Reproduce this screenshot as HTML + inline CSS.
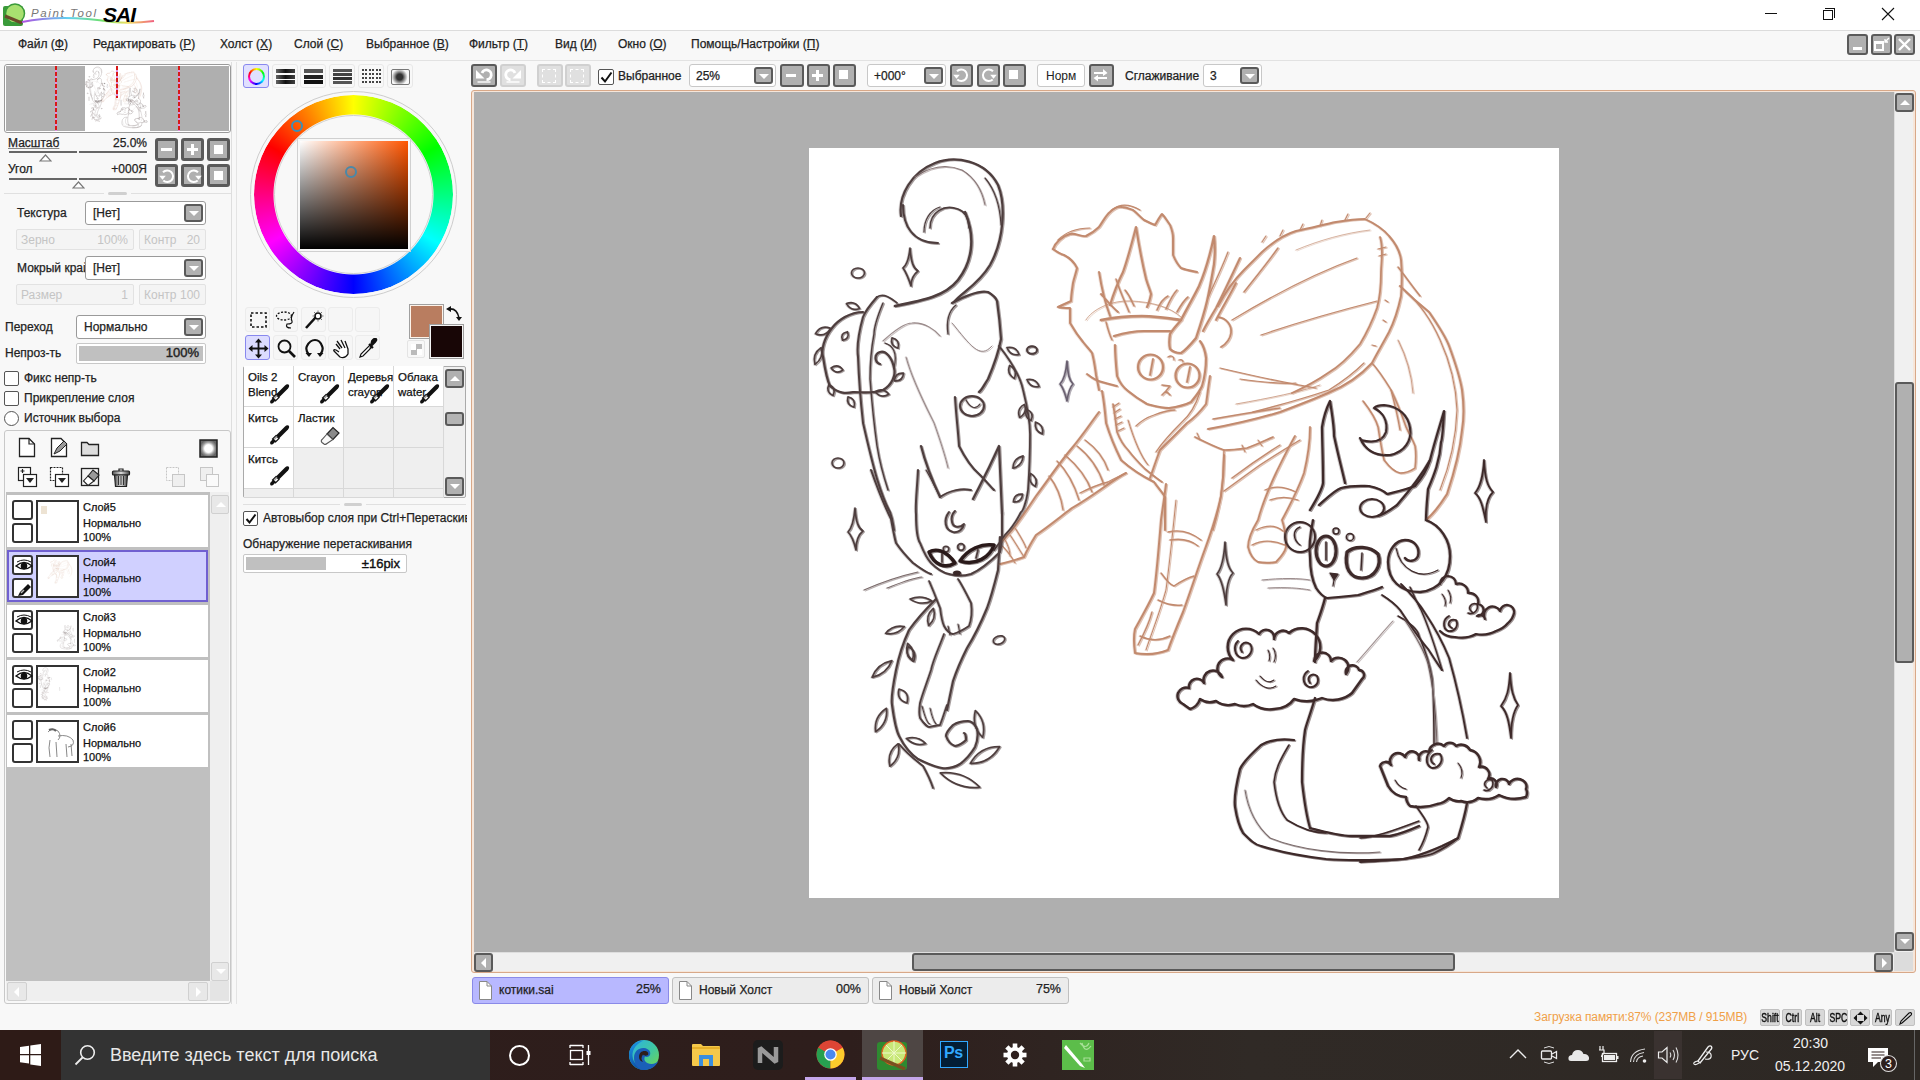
<!DOCTYPE html>
<html><head><meta charset="utf-8">
<style>
*{box-sizing:border-box;margin:0;padding:0}
html,body{width:1920px;height:1080px;overflow:hidden;background:#f8f8f8;font-family:"Liberation Sans",sans-serif;font-size:12px;color:#222}
.lbl,.mi,.dd span,.cmb span,.lt1,.bcell span,.tab span{-webkit-text-stroke:0.25px currentColor}
.a{position:absolute}
#title{left:0;top:0;width:1920px;height:31px;background:#fff;border-bottom:1px solid #dcdcdc}
#menu{left:0;top:31px;width:1920px;height:30px;background:#f8f8f8;border-bottom:1px solid #e2e2e2}
.mi{position:absolute;top:6px;font-size:12px;color:#222;white-space:nowrap}
.u{text-decoration:underline}
.gbtn{position:absolute;width:23px;height:23px;background:#b0b0b0;border:3px solid #5a5a5a;border-radius:3px}
.lbl{position:absolute;white-space:nowrap;font-size:12px;color:#222}
#canvasArea{left:471px;top:90px;width:1445px;height:883px;border:1px solid #d8a888;border-radius:3px;background:#f6e6da}
#paper{left:809px;top:148px;width:750px;height:750px;background:#fff}
#taskbar{left:0;top:1030px;width:1920px;height:50px;background:linear-gradient(90deg,#2e1d1b 0,#2e1e1c 850px,#302a26 1250px,#2d2824 1920px)}

.dd{background:#fff;border:1px solid #9a9a9a;border-radius:3px}
.dd span{position:absolute;left:7px;top:4px;font-size:12px;color:#222;white-space:nowrap}
.dd i{position:absolute;right:2px;top:2px;width:19px;height:18px;background:#b0b0b0;border:2px solid #5a5a5a;border-radius:3px}
.dd i:after{content:"";position:absolute;left:3px;top:5px;border-left:5px solid transparent;border-right:5px solid transparent;border-top:5px solid #fff}
.dis{background:#f4f4f4;border:1px solid #e2e2e2;border-radius:2px}
.dis span{position:absolute;top:3px;font-size:12px;color:#c4c4c4;white-space:nowrap}
.cb{width:15px;height:15px;border:1px solid #555;border-radius:2px;background:#fff}

.sbtn{width:18px;height:19px;background:#e8e8e8;border:1px solid #d0d0d0;border-radius:2px}
.sbtn i{position:absolute;left:4px;top:6px;width:0;height:0}
.sbtn i.up{border-left:5px solid transparent;border-right:5px solid transparent;border-bottom:5px solid #fff}
.sbtn i.dn{border-left:5px solid transparent;border-right:5px solid transparent;border-top:5px solid #fff}
.sbtn i.lt{left:6px;top:4px;border-top:5px solid transparent;border-bottom:5px solid transparent;border-right:5px solid #fff}
.sbtn i.rt{left:7px;top:4px;border-top:5px solid transparent;border-bottom:5px solid transparent;border-left:5px solid #fff}
.layer{width:201px;height:52px;background:#fff}
.layer.sel{background:#d0d0ff;border:2px solid #7060d0;left:8px}
.layer.sel>*{margin-left:-2px;margin-top:-2px}
.vbox{width:21px;height:20px;border:2px solid #333;border-radius:3px;background:#fff}
.thumb{width:43px;height:43px;border:2px solid #333;background:#fff}
.lt1{font-size:11px;color:#111;white-space:nowrap}

.cbt{width:26px;height:24px;border:1px solid #e8e8e8;border-radius:3px;background:#f8f8f8}
.cbt.sel{border:1px solid #8888ee;background:#e0e0ff}
.tbt{width:25px;height:25px;border:1px solid #ececec;border-radius:3px;background:#f6f6f6}
.tbt.sel{border:1px solid #8888ee;background:#dcdcff}
.bcell{border-right:1px solid #d8d8d8;border-bottom:1px solid #d8d8d8;font-size:11.5px;line-height:15px;color:#111;overflow:hidden}
.bcell span{white-space:nowrap;margin-top:1px}
.sbt2{width:19px;height:19px;background:#b0b0b0;border:2px solid #5a5a5a;border-radius:3px}
.sbt2 i{position:absolute;left:3px;top:5px;width:0;height:0}
.sbt2 i.up{border-left:5px solid transparent;border-right:5px solid transparent;border-bottom:5px solid #fff}
.sbt2 i.dn{border-left:5px solid transparent;border-right:5px solid transparent;border-top:5px solid #fff}

.mdi{width:21px;height:21px;background:#b0b0b0;border:2px solid #5a5a5a;border-radius:3px}
.tb2{width:26px;height:23px;background:#b0b0b0;border:2px solid #5a5a5a;border-radius:3px}
.tb2.dis2{background:#e0e0e0;border-color:#d0d0d0}
.cmb{background:#fff;border:1px solid #c8c8c8;border-radius:3px}
.cmb span{position:absolute;top:4px;font-size:12px;color:#222}
.cmb i{position:absolute;right:2px;top:2px;width:19px;height:17px;background:#b0b0b0;border:2px solid #5a5a5a;border-radius:3px}
.cmb i:after{content:"";position:absolute;left:3px;top:5px;border-left:5px solid transparent;border-right:5px solid transparent;border-top:5px solid #fff}
.sbt2 i.lt{left:5px;top:3px;border-top:5px solid transparent;border-bottom:5px solid transparent;border-right:5px solid #fff}
.sbt2 i.rt{left:6px;top:3px;border-top:5px solid transparent;border-bottom:5px solid transparent;border-left:5px solid #fff}
.tab{width:197px;height:27px;background:#ececec;border:1px solid #c0c0c0;border-radius:3px;font-size:12px;color:#222;white-space:nowrap}
.tab.sel{background:#b8b8ff;border-color:#8a8ae8}
.tab .pg{left:5px;top:2px}
.key{width:20px;height:17px;background:#d8d8d8;border:1px solid #c0c0c0;border-radius:2px;font-size:12px;color:#111;text-align:center;line-height:16px;overflow:hidden;white-space:nowrap}
.key b{display:inline-block;font-weight:normal;transform:scaleX(.72);transform-origin:50% 50%;margin:0 -8px;-webkit-text-stroke:.45px #111}
</style></head><body>
<div id="title" class="a"></div>
<div id="menu" class="a">
<span class="mi" style="left:18px">Файл (<span class="u">Ф</span>)</span>
<span class="mi" style="left:93px">Редактировать (<span class="u">Р</span>)</span>
<span class="mi" style="left:220px">Холст (<span class="u">Х</span>)</span>
<span class="mi" style="left:294px">Слой (<span class="u">С</span>)</span>
<span class="mi" style="left:366px">Выбранное (<span class="u">В</span>)</span>
<span class="mi" style="left:469px">Фильтр (<span class="u">Т</span>)</span>
<span class="mi" style="left:555px">Вид (<span class="u">И</span>)</span>
<span class="mi" style="left:618px">Окно (<span class="u">О</span>)</span>
<span class="mi" style="left:691px">Помощь/Настройки (<span class="u">П</span>)</span>
</div>

<!-- LEFT PANEL -->
<div class="a" style="left:231px;top:62px;width:1px;height:942px;background:#dedede"></div>
<div class="a" style="left:4px;top:64px;width:227px;height:69px;border:1px solid #9a9a9a;border-radius:3px;background:#fff"></div>
<div class="a" style="left:6px;top:66px;width:223px;height:65px;background:#afafaf"></div>
<div class="a" style="left:85px;top:66px;width:65px;height:65px;background:#fff"></div>
<svg class="a" style="left:85px;top:66px" width="65" height="65" viewBox="809 148 750 750"><defs><filter id="thk" x="-5%" y="-5%" width="110%" height="110%"><feMorphology operator="dilate" radius="5"/></filter><filter id="thk2" x="-5%" y="-5%" width="110%" height="110%"><feMorphology operator="dilate" radius="2.5"/></filter></defs><g filter="url(#thk)" opacity=".95"><use href="#drw"/></g></svg>
<div class="a" style="left:55px;top:66px;width:2px;height:65px;background:repeating-linear-gradient(#d81818 0 4px,#e090e0 4px 6px)"></div>
<div class="a" style="left:116px;top:66px;width:2px;height:32px;background:repeating-linear-gradient(#d81818 0 4px,#e090e0 4px 6px)"></div>
<div class="a" style="left:178px;top:66px;width:2px;height:65px;background:repeating-linear-gradient(#d81818 0 4px,#e090e0 4px 6px)"></div>

<span class="lbl" style="left:8px;top:136px;text-decoration:underline;text-decoration-color:#888">Масштаб</span>
<span class="lbl" style="left:100px;top:136px;width:47px;text-align:right">25.0%</span>
<div class="a" style="left:9px;top:151px;width:68px;height:2px;background:#666"></div>
<div class="a" style="left:79px;top:151px;width:68px;height:2px;background:#666"></div>
<svg class="a" style="left:39px;top:154px" width="13" height="8"><path d="M6.5 1 L12 7 L1 7 Z" fill="#fff" stroke="#777" stroke-width="1.2"/></svg>
<span class="lbl" style="left:8px;top:162px">Угол</span>
<span class="lbl" style="left:100px;top:162px;width:47px;text-align:right">+000Я</span>
<div class="a" style="left:9px;top:178px;width:68px;height:2px;background:#666"></div>
<div class="a" style="left:79px;top:178px;width:68px;height:2px;background:#666"></div>
<svg class="a" style="left:72px;top:181px" width="13" height="8"><path d="M6.5 1 L12 7 L1 7 Z" fill="#fff" stroke="#777" stroke-width="1.2"/></svg>

<div class="gbtn" style="left:155px;top:138px"><div class="a" style="left:3px;top:7px;width:11px;height:3px;background:#fff"></div></div>
<div class="gbtn" style="left:181px;top:138px"><div class="a" style="left:3px;top:7px;width:11px;height:3px;background:#fff"></div><div class="a" style="left:7px;top:3px;width:3px;height:11px;background:#fff"></div></div>
<div class="gbtn" style="left:207px;top:138px"><div class="a" style="left:4px;top:4px;width:9px;height:9px;background:#fff"></div></div>
<div class="gbtn" style="left:155px;top:164px"><svg class="a" style="left:-2px;top:-2px" width="23" height="23"><path d="M7 7.3 A5.8 5.8 0 1 1 7.3 15.5" fill="none" stroke="#fff" stroke-width="2"/><path d="M3.2 10.8 H9.8 L6.5 14.8Z" fill="#fff"/></svg></div>
<div class="gbtn" style="left:181px;top:164px"><svg class="a" style="left:-2px;top:-2px" width="23" height="23"><path d="M16 7.3 A5.8 5.8 0 1 0 15.7 15.5" fill="none" stroke="#fff" stroke-width="2"/><path d="M13.2 10.8 H19.8 L16.5 14.8Z" fill="#fff"/></svg></div>
<div class="gbtn" style="left:207px;top:164px"><div class="a" style="left:4px;top:4px;width:9px;height:9px;background:#fff"></div></div>

<div class="a" style="left:4px;top:193px;width:100px;height:1px;background:#e0e0e0"></div>
<div class="a" style="left:131px;top:193px;width:100px;height:1px;background:#e0e0e0"></div>
<div class="a" style="left:108px;top:192px;width:19px;height:3px;border-radius:2px;background:#d0d0d0"></div>

<span class="lbl" style="left:17px;top:206px">Текстура</span>
<div class="a dd" style="left:85px;top:201px;width:121px;height:24px"><span>[Нет]</span><i></i></div>
<div class="a dis" style="left:16px;top:229px;width:118px;height:21px"><span style="left:4px">Зерно</span><span style="right:5px">100%</span></div>
<div class="a dis" style="left:139px;top:229px;width:67px;height:21px"><span style="left:4px">Контр</span><span style="right:5px">20</span></div>
<span class="lbl" style="left:17px;top:261px">Мокрый край</span>
<div class="a dd" style="left:85px;top:256px;width:121px;height:24px"><span>[Нет]</span><i></i></div>
<div class="a dis" style="left:16px;top:284px;width:118px;height:21px"><span style="left:4px">Размер</span><span style="right:5px">1</span></div>
<div class="a dis" style="left:139px;top:284px;width:67px;height:21px"><span style="left:4px">Контр</span><span style="right:5px">100</span></div>

<span class="lbl" style="left:5px;top:320px">Переход</span>
<div class="a dd" style="left:76px;top:315px;width:130px;height:24px"><span style="left:7px">Нормально</span><i></i></div>
<span class="lbl" style="left:5px;top:346px">Непроз-ть</span>
<div class="a" style="left:76px;top:343px;width:130px;height:21px;border:1px solid #c8c8c8;border-radius:2px;background:#fff"><div class="a" style="left:2px;top:2px;width:124px;height:15px;background:#c0c0c0"></div><span class="a" style="right:6px;top:1px;font-size:13px;color:#222;-webkit-text-stroke:.4px #222">100%</span></div>

<div class="a cb" style="left:4px;top:371px"></div><span class="lbl" style="left:24px;top:371px">Фикс непр-ть</span>
<div class="a cb" style="left:4px;top:391px"></div><span class="lbl" style="left:24px;top:391px">Прикрепление слоя</span>
<div class="a" style="left:4px;top:411px;width:15px;height:15px;border:1px solid #555;border-radius:50%;background:#fff"></div><span class="lbl" style="left:24px;top:411px">Источник выбора</span>

<!-- layers box -->
<div class="a" style="left:4px;top:430px;width:227px;height:574px;border:1px solid #c8c8c8;border-radius:3px;background:#f8f8f8"></div>

<!-- layer icons -->
<svg class="a" style="left:17px;top:437px" width="20" height="21"><path d="M2.5 1.5 H12 L17.5 7 V19.5 H2.5 Z" fill="#fff" stroke="#222" stroke-width="1.3"/><path d="M12 1.5 V7 H17.5" fill="none" stroke="#222" stroke-width="1.2"/></svg>
<svg class="a" style="left:49px;top:437px" width="21" height="21"><path d="M2.5 1.5 H12 L17.5 7 V19.5 H2.5 Z" fill="#fff" stroke="#222" stroke-width="1.3"/><path d="M5 17 L8 11 L15 4 L18 7 L11 14 Z" fill="#999" stroke="#222" stroke-width="1"/></svg>
<svg class="a" style="left:80px;top:439px" width="20" height="18"><path d="M1.5 3.5 H7 L9 5.5 H18.5 V16.5 H1.5 Z" fill="#ddd" stroke="#222" stroke-width="1.3"/></svg>
<svg class="a" style="left:199px;top:439px" width="19" height="19"><defs><radialGradient id="mk"><stop offset=".45" stop-color="#fff"/><stop offset=".75" stop-color="#999"/><stop offset="1" stop-color="#666"/></radialGradient></defs><rect x="1" y="1" width="17" height="17" fill="url(#mk)" stroke="#222" stroke-width="1.5"/></svg>
<svg class="a" style="left:17px;top:466px" width="21" height="22"><rect x="1.5" y="1.5" width="12" height="13" fill="#fff" stroke="#222" stroke-width="1.2"/><rect x="6.5" y="8.5" width="13" height="12" fill="#fff" stroke="#222" stroke-width="1.2"/><path d="M7.5 5 h-4 M5.5 3 v4" stroke="#222" stroke-width="1.2"/><path d="M9 12 h8 l-4 5z" fill="#222"/></svg>
<svg class="a" style="left:49px;top:466px" width="21" height="22"><rect x="1.5" y="1.5" width="12" height="13" fill="#fff" stroke="#222" stroke-width="1.2" stroke-dasharray="2 1"/><rect x="6.5" y="8.5" width="13" height="12" fill="#fff" stroke="#222" stroke-width="1.2"/><path d="M9 12 h8 l-4 5z" fill="#222"/></svg>
<svg class="a" style="left:80px;top:466px" width="21" height="22"><rect x="1.5" y="2.5" width="17" height="17" fill="#f4f4f4" stroke="#222" stroke-width="1.3"/><path d="M8 10 L13 4 L19 9 L14 15Z" fill="#999" stroke="#222" stroke-width="1.1"/><path d="M8 10 L3.5 15 L8 19.5 L14 15Z" fill="#fff" stroke="#222" stroke-width="1.1"/></svg>
<svg class="a" style="left:111px;top:466px" width="21" height="22"><defs><linearGradient id="tr"><stop offset="0" stop-color="#555"/><stop offset=".5" stop-color="#ddd"/><stop offset="1" stop-color="#444"/></linearGradient></defs><rect x="1.5" y="5" width="17" height="4" rx="1" fill="url(#tr)" stroke="#222" stroke-width="1.2"/><path d="M8 5 V3 H12 V5" fill="none" stroke="#222" stroke-width="1.2"/><path d="M3.5 9 H16.5 L15.5 20.5 H4.5Z" fill="url(#tr)" stroke="#222" stroke-width="1.2"/><path d="M7.5 10 V19 M10 10 V19 M12.5 10 V19" stroke="#333" stroke-width="1"/></svg>
<svg class="a" style="left:165px;top:466px" width="21" height="22" opacity="0.3"><rect x="1.5" y="1.5" width="12" height="13" fill="#fff" stroke="#555" stroke-dasharray="2 1"/><rect x="7.5" y="8.5" width="12" height="12" fill="#ddd" stroke="#555"/></svg>
<svg class="a" style="left:199px;top:466px" width="21" height="22" opacity="0.3"><rect x="1.5" y="1.5" width="12" height="13" fill="#ddd" stroke="#555"/><rect x="7.5" y="8.5" width="12" height="12" fill="#fff" stroke="#555"/></svg>

<div class="a" style="left:6px;top:492px;width:204px;height:489px;background:#c0c0c0"></div>
<div class="a" style="left:210px;top:492px;width:19px;height:489px;background:#efefef"></div>
<div class="a sbtn" style="left:211px;top:495px"><i class="up"></i></div>
<div class="a sbtn" style="left:211px;top:962px"><i class="dn"></i></div>
<div class="a" style="left:6px;top:981px;width:204px;height:20px;background:#efefef"></div>
<div class="a sbtn" style="left:7px;top:982px;width:20px"><i class="lt"></i></div>
<div class="a sbtn" style="left:188px;top:982px;width:20px"><i class="rt"></i></div>
<div class="a" style="left:210px;top:981px;width:19px;height:20px;background:#e4e4e4"></div>
<div class="a layer" style="left:7px;top:495px"><div class="a vbox" style="left:5px;top:5px"></div><div class="a vbox" style="left:5px;top:28px"></div><div class="a thumb" style="left:29px;top:5px"><div class="a" style="left:3px;top:4px;width:6px;height:8px;background:#e8dcc8;opacity:.8"></div></div><span class="a lt1" style="left:76px;top:6px">Слой5</span><span class="a lt1" style="left:76px;top:22px">Нормально</span><span class="a lt1" style="left:76px;top:36px">100%</span></div>
<div class="a layer sel" style="left:7px;top:550px"><div class="a vbox" style="left:5px;top:5px"><svg class="a" style="left:1px;top:2px" width="18" height="14"><path d="M1 7 Q9 0 17 7 Q9 13 1 7Z" fill="#fff" stroke="#111" stroke-width="1.4"/><circle cx="9" cy="7" r="3.3" fill="#111"/><path d="M2 3 Q9 -1 16 3" fill="none" stroke="#111" stroke-width="1"/></svg></div><div class="a vbox" style="left:5px;top:28px"><svg class="a" style="left:1px;top:1px" width="18" height="17"><path d="M3 15 L5 11 L13 3 L16 6 L8 14 Z" fill="#111"/><path d="M6 12 L9 9" stroke="#bbb" stroke-width="1.5"/></svg></div><div class="a thumb" style="left:29px;top:5px"><svg class="a" width="39" height="39" viewBox="809 148 750 750"><g filter="url(#thk)" opacity=".9" fill="none" stroke-linecap="round" stroke-linejoin="round"><use href="#gor"/></g></svg></div><span class="a lt1" style="left:76px;top:6px">Слой4</span><span class="a lt1" style="left:76px;top:22px">Нормально</span><span class="a lt1" style="left:76px;top:36px">100%</span></div>
<div class="a layer" style="left:7px;top:605px"><div class="a vbox" style="left:5px;top:5px"><svg class="a" style="left:1px;top:2px" width="18" height="14"><path d="M1 7 Q9 0 17 7 Q9 13 1 7Z" fill="#fff" stroke="#111" stroke-width="1.4"/><circle cx="9" cy="7" r="3.3" fill="#111"/><path d="M2 3 Q9 -1 16 3" fill="none" stroke="#111" stroke-width="1"/></svg></div><div class="a vbox" style="left:5px;top:28px"></div><div class="a thumb" style="left:29px;top:5px"><svg class="a" width="39" height="39" viewBox="809 148 750 750"><g filter="url(#thk)" opacity=".9" fill="none" stroke-linecap="round" stroke-linejoin="round"><use href="#gdr"/></g></svg></div><span class="a lt1" style="left:76px;top:6px">Слой3</span><span class="a lt1" style="left:76px;top:22px">Нормально</span><span class="a lt1" style="left:76px;top:36px">100%</span></div>
<div class="a layer" style="left:7px;top:660px"><div class="a vbox" style="left:5px;top:5px"><svg class="a" style="left:1px;top:2px" width="18" height="14"><path d="M1 7 Q9 0 17 7 Q9 13 1 7Z" fill="#fff" stroke="#111" stroke-width="1.4"/><circle cx="9" cy="7" r="3.3" fill="#111"/><path d="M2 3 Q9 -1 16 3" fill="none" stroke="#111" stroke-width="1"/></svg></div><div class="a vbox" style="left:5px;top:28px"></div><div class="a thumb" style="left:29px;top:5px"><svg class="a" width="39" height="39" viewBox="809 148 750 750"><g filter="url(#thk)" opacity=".9" fill="none" stroke-linecap="round" stroke-linejoin="round"><use href="#gdl"/></g></svg></div><span class="a lt1" style="left:76px;top:6px">Слой2</span><span class="a lt1" style="left:76px;top:22px">Нормально</span><span class="a lt1" style="left:76px;top:36px">100%</span></div>
<div class="a layer" style="left:7px;top:715px"><div class="a vbox" style="left:5px;top:5px"></div><div class="a vbox" style="left:5px;top:28px"></div><div class="a thumb" style="left:29px;top:5px"><svg class="a" width="41" height="41"><g fill="none" stroke="#444" stroke-width=".9" opacity=".7"><path d="M10 10 Q14 5 20 9 Q24 14 20 18 M12 18 Q10 25 12 35 M18 20 L19 35 M20 14 Q30 12 35 18 Q37 24 30 25 M28 22 L29 35 M33 22 L34 34"/><path d="M11 8 Q15 6 18 9" stroke="#222" stroke-width="2"/></g></svg></div><span class="a lt1" style="left:76px;top:6px">Слой6</span><span class="a lt1" style="left:76px;top:22px">Нормально</span><span class="a lt1" style="left:76px;top:36px">100%</span></div>

<!-- COLOR PANEL -->
<div class="a" style="left:236px;top:62px;width:1px;height:942px;background:#e4e4e4"></div>
<div class="a cbt sel" style="left:243px;top:64px"><div class="a" style="left:4px;top:3px;width:17px;height:17px;border-radius:50%;background:conic-gradient(#ff0 0deg,#0f0 60deg,#0ff 120deg,#00f 180deg,#f0f 240deg,#f00 300deg,#ff0 360deg)"><div class="a" style="left:2px;top:2px;width:13px;height:13px;border-radius:50%;background:#e0e0ff"></div></div></div>
<div class="a cbt" style="left:272px;top:64px"><div class="a" style="left:3px;top:4px;width:19px;height:15px;background:linear-gradient(#111 0 4px,transparent 4px 5.5px,#111 5.5px 9.5px,transparent 9.5px 11px,#111 11px 15px)"></div><div class="a" style="left:3px;top:4px;width:19px;height:15px;background:linear-gradient(90deg,rgba(255,255,255,.35),rgba(255,255,255,0) 50%,rgba(255,255,255,.2))"></div></div>
<div class="a cbt" style="left:300px;top:64px"><div class="a" style="left:3px;top:4px;width:19px;height:15px;background:linear-gradient(#555 0 4px,transparent 4px 5.5px,#222 5.5px 9.5px,transparent 9.5px 11px,#111 11px 15px)"></div></div>
<div class="a cbt" style="left:329px;top:64px"><div class="a" style="left:3px;top:4px;width:19px;height:15px;background:linear-gradient(#555 0 2.5px,transparent 2.5px 4px,#444 4px 6.5px,transparent 6.5px 8px,#333 8px 10.5px,transparent 10.5px 12px,#555 12px 14.5px)"></div></div>
<div class="a cbt" style="left:358px;top:64px"><div class="a" style="left:3px;top:4px;width:19px;height:15px;background:repeating-linear-gradient(90deg,#444 0 2px,transparent 2px 3.5px);-webkit-mask:repeating-linear-gradient(#000 0 2px,transparent 2px 4px)"></div></div>
<div class="a cbt" style="left:387px;top:64px"><div class="a" style="left:3px;top:4px;width:19px;height:16px;border:1px solid #777;border-radius:2px;background:radial-gradient(circle at 45% 50%,#333 0 3px,#888 5px,transparent 8px)"></div></div>

<div class="a" style="left:250px;top:91px;width:207px;height:207px;border-radius:50%;border:1.5px solid #cdcdcd"></div>
<div class="a" style="left:254px;top:95px;width:199px;height:199px;border-radius:50%;background:conic-gradient(#ff0 0deg,#0f0 60deg,#0ff 120deg,#00f 180deg,#f0f 240deg,#f00 300deg,#ff0 360deg);-webkit-mask:radial-gradient(circle,transparent 79.5px,#000 80.5px)"></div>
<div class="a" style="left:274px;top:115px;width:159px;height:159px;border-radius:50%;border:1.5px solid #d0d0d0"></div>
<div class="a" style="left:297px;top:138px;width:114px;height:114px;border:1.5px solid #d0d0d0;background:#f8f8f8"></div>
<div class="a" style="left:300px;top:141px;width:108px;height:108px;background:linear-gradient(90deg,#fff,#ff5500)"></div>
<div class="a" style="left:300px;top:141px;width:108px;height:108px;background:linear-gradient(rgba(0,0,0,0),#000)"></div>
<div class="a" style="left:291px;top:120px;width:12px;height:12px;border-radius:50%;border:2.5px solid #3a90b8"></div>
<div class="a" style="left:345px;top:166px;width:12px;height:12px;border-radius:50%;border:2.5px solid #4a88a8"></div>

<!-- tools -->
<div class="a tbt" style="left:245px;top:307px"><svg class="a" style="left:3px;top:3px" width="19" height="18"><rect x="2" y="2" width="15" height="14" fill="none" stroke="#111" stroke-width="1.6" stroke-dasharray="2.5 2"/></svg></div>
<div class="a tbt" style="left:273px;top:307px"><svg class="a" style="left:1px;top:2px" width="22" height="20"><ellipse cx="9" cy="6" rx="7.5" ry="4" fill="none" stroke="#111" stroke-width="1.3" stroke-dasharray="2 1.5"/><path d="M19 2 Q15 8 17 11 Q18 14 12 14 Q10 18 16 18" fill="none" stroke="#111" stroke-width="1.2"/></svg></div>
<div class="a tbt" style="left:301px;top:307px"><svg class="a" style="left:2px;top:2px" width="21" height="20"><path d="M2 18 L12 7" stroke="#111" stroke-width="2.6"/><circle cx="14" cy="6" r="3" fill="#fff" stroke="#111" stroke-width="1.6"/><path d="M14 0.5v2 M14 9.5v2 M8.5 6h2 M17.5 6h2 M10 2l1.3 1.3 M18 2l-1.3 1.3 M18 10l-1.3-1.3" stroke="#777" stroke-width="1"/></svg></div>
<div class="a tbt" style="left:328px;top:307px"></div>
<div class="a tbt" style="left:355px;top:307px"></div>
<div class="a tbt sel" style="left:245px;top:335px"><svg class="a" style="left:2px;top:2px" width="21" height="21"><path d="M10.5 2 V19 M2 10.5 H19" stroke="#111" stroke-width="1.8"/><path d="M10.5 0.5 L7 4.5 H14Z M10.5 20.5 L7 16.5 H14Z M0.5 10.5 L4.5 7 V14Z M20.5 10.5 L16.5 7 V14Z" fill="#111"/></svg></div>
<div class="a tbt" style="left:273px;top:335px"><svg class="a" style="left:2px;top:2px" width="21" height="21"><circle cx="8.5" cy="8.5" r="6" fill="none" stroke="#111" stroke-width="1.8"/><path d="M13 13 L19 19" stroke="#111" stroke-width="2.6"/></svg></div>
<div class="a tbt" style="left:301px;top:335px"><svg class="a" style="left:2px;top:2px" width="21" height="21"><path d="M5 17 Q1 12 3 8 Q6 2 11 2 Q16 2 18 8 Q20 12 16 17" fill="none" stroke="#111" stroke-width="2.2"/><path d="M1.5 15 H8 L5 19Z M19.5 15 H13 L16 19Z" fill="#111"/></svg></div>
<div class="a tbt" style="left:328px;top:335px"><svg class="a" style="left:2px;top:2px" width="21" height="21"><path d="M5 6 L9 11 M6 3 L11 10 M10 2 L14 10 M14 3 L17 11 L17 16 Q14 21 9 19 L3 13 Q2 11 5 12 L8 14" fill="#fff" stroke="#111" stroke-width="1.3" stroke-linejoin="round"/></svg></div>
<div class="a tbt" style="left:355px;top:335px"><svg class="a" style="left:2px;top:2px" width="21" height="21"><path d="M2 19 L3 16 L12 7 L14 9 L5 18Z" fill="#fff" stroke="#111" stroke-width="1.2"/><path d="M11 6 L15 10 M13 8 L17 4 Q19 2 18 1 Q16 0 14 3 Z" fill="#111" stroke="#111" stroke-width="2"/></svg></div>

<div class="a" style="left:409px;top:304px;width:35px;height:35px;background:#fdf3ea;border:1px solid #a0a0a0"><div class="a" style="left:1px;top:1px;width:31px;height:31px;background:#b97d60"></div></div>
<div class="a" style="left:429px;top:324px;width:35px;height:35px;background:#f4f4f4;border:1px solid #a0a0a0"><div class="a" style="left:1px;top:1px;width:31px;height:31px;background:#180606"></div></div>
<svg class="a" style="left:445px;top:305px" width="18" height="18"><path d="M4 4 Q12 3 14 13" fill="none" stroke="#111" stroke-width="1.6"/><path d="M1 4 L6 1 V7Z M11 12 H17 L14 16Z" fill="#111"/></svg>
<div class="a" style="left:407px;top:340px;width:18px;height:18px;border:1px solid #e4e4e4;border-radius:2px;background:#f8f8f8"><div class="a" style="left:3px;top:3px;width:11px;height:11px;background:conic-gradient(#bbb 0 90deg,#fff 90deg 180deg,#bbb 180deg 270deg,#fff 270deg)"></div></div>

<!-- brushes -->
<div class="a" style="left:243px;top:366px;width:223px;height:132px;border:1px solid #aaa;border-radius:2px;background:#f0f0f0;overflow:hidden">
 <div class="a" style="left:0;top:0;width:201px;height:130px;background:#efefef"></div>
</div>
<div class="a bcell" style="left:244px;top:366px;width:50px;height:41px;background:#fff"><span class="a" style="left:4px;top:3px">Oils 2<br>Blend</span><svg class="a" style="right:2px;bottom:2px" width="22" height="21"><path d="M19.5 1.5 Q21 3 19 5.5 L10 14.5 L7 11.5 L16 2.5 Q18 0.5 19.5 1.5Z" fill="#111"/><path d="M7 11.5 L10 14.5 L6.5 18 L3.5 15Z" fill="#fff" stroke="#111" stroke-width="1.2"/><path d="M4.5 14.5 L7 17 L4 20 Q2 21 1.5 20 Q0.5 19 1.5 17.5Z" fill="#111"/><path d="M5.5 15 L8 12.5" stroke="#999" stroke-width="1.5"/></svg></div>
<div class="a bcell" style="left:294px;top:366px;width:50px;height:41px;background:#fff"><span class="a" style="left:4px;top:3px">Crayon</span><svg class="a" style="right:2px;bottom:2px" width="22" height="21"><path d="M19.5 1.5 Q21 3 19 5.5 L10 14.5 L7 11.5 L16 2.5 Q18 0.5 19.5 1.5Z" fill="#111"/><path d="M7 11.5 L10 14.5 L6.5 18 L3.5 15Z" fill="#fff" stroke="#111" stroke-width="1.2"/><path d="M4.5 14.5 L7 17 L4 20 Q2 21 1.5 20 Q0.5 19 1.5 17.5Z" fill="#111"/><path d="M5.5 15 L8 12.5" stroke="#999" stroke-width="1.5"/></svg></div>
<div class="a bcell" style="left:344px;top:366px;width:50px;height:41px;background:#fff"><span class="a" style="left:4px;top:3px">Деревья<br>crayon</span><svg class="a" style="right:2px;bottom:2px" width="22" height="21"><path d="M19.5 1.5 Q21 3 19 5.5 L10 14.5 L7 11.5 L16 2.5 Q18 0.5 19.5 1.5Z" fill="#111"/><path d="M7 11.5 L10 14.5 L6.5 18 L3.5 15Z" fill="#fff" stroke="#111" stroke-width="1.2"/><path d="M4.5 14.5 L7 17 L4 20 Q2 21 1.5 20 Q0.5 19 1.5 17.5Z" fill="#111"/><path d="M5.5 15 L8 12.5" stroke="#999" stroke-width="1.5"/></svg></div>
<div class="a bcell" style="left:394px;top:366px;width:50px;height:41px;background:#fff"><span class="a" style="left:4px;top:3px">Облака<br>water</span><svg class="a" style="right:2px;bottom:2px" width="22" height="21"><path d="M19.5 1.5 Q21 3 19 5.5 L10 14.5 L7 11.5 L16 2.5 Q18 0.5 19.5 1.5Z" fill="#111"/><path d="M7 11.5 L10 14.5 L6.5 18 L3.5 15Z" fill="#fff" stroke="#111" stroke-width="1.2"/><path d="M4.5 14.5 L7 17 L4 20 Q2 21 1.5 20 Q0.5 19 1.5 17.5Z" fill="#111"/><path d="M5.5 15 L8 12.5" stroke="#999" stroke-width="1.5"/></svg></div>
<div class="a bcell" style="left:244px;top:407px;width:50px;height:41px;background:#fff"><span class="a" style="left:4px;top:3px">Китсь</span><svg class="a" style="right:2px;bottom:2px" width="22" height="21"><path d="M19.5 1.5 Q21 3 19 5.5 L10 14.5 L7 11.5 L16 2.5 Q18 0.5 19.5 1.5Z" fill="#111"/><path d="M7 11.5 L10 14.5 L6.5 18 L3.5 15Z" fill="#fff" stroke="#111" stroke-width="1.2"/><path d="M4.5 14.5 L7 17 L4 20 Q2 21 1.5 20 Q0.5 19 1.5 17.5Z" fill="#111"/><path d="M5.5 15 L8 12.5" stroke="#999" stroke-width="1.5"/></svg></div>
<div class="a bcell" style="left:294px;top:407px;width:50px;height:41px;background:#fff"><span class="a" style="left:4px;top:3px">Ластик</span><svg class="a" style="right:3px;bottom:2px" width="22" height="21"><path d="M9 10 L15 3.5 L21 9 L15 15.5Z" fill="#8a8a8a" stroke="#222" stroke-width="1.2"/><path d="M9 10 L4 15.5 Q2.5 17 4 18.5 L6 20 Q7.5 21 9 19.5 L15 15.5Z" fill="#fafafa" stroke="#555" stroke-width="1.1"/></svg></div>
<div class="a bcell" style="left:344px;top:407px;width:50px;height:41px;background:#efefef"></div>
<div class="a bcell" style="left:394px;top:407px;width:50px;height:41px;background:#efefef"></div>
<div class="a bcell" style="left:244px;top:448px;width:50px;height:41px;background:#fff"><span class="a" style="left:4px;top:3px">Китсь</span><svg class="a" style="right:2px;bottom:2px" width="22" height="21"><path d="M19.5 1.5 Q21 3 19 5.5 L10 14.5 L7 11.5 L16 2.5 Q18 0.5 19.5 1.5Z" fill="#111"/><path d="M7 11.5 L10 14.5 L6.5 18 L3.5 15Z" fill="#fff" stroke="#111" stroke-width="1.2"/><path d="M4.5 14.5 L7 17 L4 20 Q2 21 1.5 20 Q0.5 19 1.5 17.5Z" fill="#111"/><path d="M5.5 15 L8 12.5" stroke="#999" stroke-width="1.5"/></svg></div>
<div class="a bcell" style="left:294px;top:448px;width:50px;height:41px;background:#efefef"></div>
<div class="a bcell" style="left:344px;top:448px;width:50px;height:41px;background:#efefef"></div>
<div class="a bcell" style="left:394px;top:448px;width:50px;height:41px;background:#efefef"></div>
<div class="a bcell" style="left:244px;top:489px;width:50px;height:9px;background:#efefef"></div>
<div class="a bcell" style="left:294px;top:489px;width:50px;height:9px;background:#efefef"></div>
<div class="a bcell" style="left:344px;top:489px;width:50px;height:9px;background:#efefef"></div>
<div class="a bcell" style="left:394px;top:489px;width:50px;height:9px;background:#efefef"></div>

<div class="a sbt2" style="left:445px;top:369px"><i class="up"></i></div>
<div class="a" style="left:445px;top:412px;width:19px;height:14px;background:#b4b4b4;border:2px solid #5a5a5a;border-radius:3px"></div>
<div class="a sbt2" style="left:445px;top:477px"><i class="dn"></i></div>

<div class="a" style="left:243px;top:504px;width:97px;height:1px;background:#e0e0e0"></div>
<div class="a" style="left:366px;top:504px;width:100px;height:1px;background:#e0e0e0"></div>
<div class="a" style="left:344px;top:503px;width:18px;height:3px;border-radius:2px;background:#d0d0d0"></div>
<div class="a cb" style="left:243px;top:511px"><svg class="a" style="left:1px;top:1px" width="12" height="12"><path d="M1.5 6 L4.5 9.5 L10.5 1.5" fill="none" stroke="#111" stroke-width="2"/></svg></div>
<span class="lbl" style="left:263px;top:511px;width:204px;overflow:hidden">Автовыбор слоя при Ctrl+Перетаскивании</span>
<span class="lbl" style="left:243px;top:537px">Обнаружение перетаскивания</span>
<div class="a" style="left:243px;top:554px;width:164px;height:19px;border:1px solid #c8c8c8;border-radius:2px;background:#fff"><div class="a" style="left:2px;top:2px;width:80px;height:13px;background:#c0c0c0"></div><span class="a" style="right:6px;top:1px;font-size:13px;color:#111;-webkit-text-stroke:.4px #111">±16pix</span></div>

<!-- TITLE -->
<svg class="a" style="left:2px;top:2px" width="155" height="26">
 <defs><linearGradient id="rb" x1="0" x2="1"><stop offset="0" stop-color="#b050e0"/><stop offset=".35" stop-color="#60d0f0"/><stop offset=".6" stop-color="#70e070"/><stop offset=".8" stop-color="#f0e060"/><stop offset="1" stop-color="#f06080"/></linearGradient></defs>
 <rect x="1" y="4" width="20" height="20" rx="2" fill="#3a9a3a"/>
 <circle cx="13" cy="11.5" r="9.5" fill="#a8e070" stroke="#3a9a3a" stroke-width="1.5"/>
 <path d="M3 14 L20 21" stroke="#6a4a2a" stroke-width="3"/>
 <path d="M20 20 Q60 12 110 20 Q130 22 152 19" fill="none" stroke="url(#rb)" stroke-width="2"/>
 <text x="29" y="15" font-family="Liberation Sans" font-style="italic" font-size="11.5" fill="#777" letter-spacing="1.6">Paint Tool</text>
 <text x="101" y="19.5" font-family="Liberation Sans" font-style="italic" font-weight="bold" font-size="21" fill="#000" letter-spacing="-1">SAI</text>
</svg>
<div class="a" style="left:1765px;top:13px;width:12px;height:1px;background:#111"></div>
<div class="a" style="left:1823px;top:10px;width:10px;height:10px;border:1px solid #111"></div>
<div class="a" style="left:1825px;top:8px;width:10px;height:10px;border-top:1px solid #111;border-right:1px solid #111"></div>
<svg class="a" style="left:1881px;top:7px" width="14" height="14"><path d="M1 1 L13 13 M13 1 L1 13" stroke="#111" stroke-width="1.1"/></svg>
<div class="a mdi" style="left:1847px;top:34px"><div class="a" style="left:4px;top:11px;width:9px;height:3px;background:#fff"></div></div>
<div class="a mdi" style="left:1871px;top:34px"><div class="a" style="left:1px;top:5px;width:10px;height:10px;border:2px solid #fff;border-top-width:3px"></div><svg class="a" style="left:10px;top:1px" width="7" height="7"><path d="M6 1 L2 5 M2 2 V5 H5" fill="none" stroke="#fff" stroke-width="1.3"/></svg></div>
<div class="a mdi" style="left:1894px;top:34px"><svg class="a" style="left:1px;top:1px" width="15" height="15"><path d="M2 2 L13 13 M13 2 L2 13" stroke="#fff" stroke-width="2.4"/></svg></div>

<!-- TOOLBAR -->
<div class="a tb2" style="left:471px;top:64px"><svg class="a" style="left:-2px;top:-2px" width="26" height="23"><path d="M11 9 A4.8 4.8 0 1 1 15.5 15.6" fill="none" stroke="#fff" stroke-width="2.8"/><path d="M5 6 L5 14.5 L13.5 14.5Z" fill="#fff"/><path d="M6.5 18 H19.5" stroke="#fff" stroke-width="1.4"/></svg></div>
<div class="a tb2 dis2" style="left:500px;top:64px"><svg class="a" style="left:-2px;top:-2px" width="26" height="23"><path d="M15 9 A4.8 4.8 0 1 0 10.5 15.6" fill="none" stroke="#fff" stroke-width="2.8"/><path d="M21 6 L21 14.5 L12.5 14.5Z" fill="#fff"/><path d="M6.5 18 H19.5" stroke="#fff" stroke-width="1.4"/></svg></div>
<div class="a tb2 dis2" style="left:537px;top:64px"><div class="a" style="left:3px;top:3px;width:14px;height:14px;border:1px dashed #fff"></div></div>
<div class="a tb2 dis2" style="left:565px;top:64px"><div class="a" style="left:3px;top:3px;width:14px;height:14px;border:1px dashed #fff"></div></div>
<div class="a cb" style="left:598px;top:69px;width:16px;height:16px"><svg class="a" style="left:1px;top:1px" width="13" height="13"><path d="M1.5 6.5 L5 10.5 L11.5 1.5" fill="none" stroke="#111" stroke-width="2"/></svg></div>
<span class="lbl" style="left:618px;top:69px">Выбранное</span>
<div class="a cmb" style="left:689px;top:64px;width:87px;height:23px"><span style="left:6px">25%</span><i></i></div>
<div class="a tb2" style="left:780px;top:64px;width:24px"><div class="a" style="left:4px;top:8px;width:10px;height:3px;background:#fff"></div></div>
<div class="a tb2" style="left:807px;top:64px;width:23px"><div class="a" style="left:3px;top:8px;width:11px;height:3px;background:#fff"></div><div class="a" style="left:7px;top:4px;width:3px;height:11px;background:#fff"></div></div>
<div class="a tb2" style="left:833px;top:64px;width:23px"><div class="a" style="left:4px;top:4px;width:9px;height:9px;background:#fff"></div></div>
<div class="a cmb" style="left:867px;top:64px;width:79px;height:23px"><span style="left:6px">+000°</span><i></i></div>
<div class="a tb2" style="left:950px;top:64px;width:23px"><svg class="a" style="left:-2px;top:-2px" width="23" height="23"><path d="M7 7.3 A5.8 5.8 0 1 1 7.3 15.5" fill="none" stroke="#fff" stroke-width="2"/><path d="M3.2 10.8 H9.8 L6.5 14.8Z" fill="#fff"/></svg></div>
<div class="a tb2" style="left:977px;top:64px;width:23px"><svg class="a" style="left:-2px;top:-2px" width="23" height="23"><path d="M16 7.3 A5.8 5.8 0 1 0 15.7 15.5" fill="none" stroke="#fff" stroke-width="2"/><path d="M13.2 10.8 H19.8 L16.5 14.8Z" fill="#fff"/></svg></div>
<div class="a tb2" style="left:1003px;top:64px;width:23px"><div class="a" style="left:4px;top:4px;width:9px;height:9px;background:#fff"></div></div>
<div class="a" style="left:1037px;top:64px;width:48px;height:23px;border:1px solid #c8c8c8;border-radius:3px;background:#fff"><span class="a" style="left:8px;top:4px;font-size:12px;color:#222">Норм</span></div>
<div class="a tb2" style="left:1089px;top:64px;width:25px"><svg class="a" style="left:1px;top:1px" width="17" height="17"><path d="M2 6 H14 M15 11 H3" stroke="#fff" stroke-width="2"/><path d="M11 2 L15.5 6 L11 9Z M6 8 L1.5 11 L6 14.5Z" fill="#fff"/></svg></div>
<span class="lbl" style="left:1125px;top:69px">Сглаживание</span>
<div class="a cmb" style="left:1203px;top:64px;width:59px;height:23px"><span style="left:6px">3</span><i></i></div>
<div id="canvasArea" class="a"></div>
<div class="a" style="left:474px;top:92px;width:1420px;height:860px;background:#afafaf"></div>
<div id="paper" class="a"></div>
<svg class="a" style="left:809px;top:148px" width="750" height="750" viewBox="809 148 750 750">
<g id="drw" fill="none" stroke-linecap="round" stroke-linejoin="round">
<!-- ORANGE CAT -->
<g id="gor" stroke="#c28a6e" stroke-width="1.9">
 <!-- mane outline -->
 <path d="M1053,249 C1055,243 1062,236 1070,234 C1076,233 1082,237 1086,236 C1092,233 1096,230 1099,227 C1104,220 1106,215 1110,212 C1114,208 1118,206 1122,207 C1126,207 1130,209 1133,210 C1138,214 1140,217 1144,220 C1148,222 1152,224 1155,225 C1158,220 1160,216 1162,214 C1165,217 1167,221 1170,225 C1172,230 1173,234 1173,238 C1173,244 1173,250 1173,255 C1175,260 1178,265 1181,268 C1186,270 1192,271 1197,272" stroke-width="2"/>
 <path d="M1058,240 C1066,232 1078,228 1090,228 M1112,210 C1120,203 1130,204 1140,210" stroke-width="1.2"/>
 <path d="M1053,249 C1057,252 1060,254 1064,255 C1070,258 1074,262 1077,268 C1076,273 1074,278 1073,283 C1072,290 1071,296 1071,301 C1067,303 1062,305 1058,307 C1062,308 1066,308 1070,308 C1070,313 1070,318 1070,323 C1074,330 1078,336 1083,342 C1086,346 1090,350 1092,353 C1094,360 1095,368 1096,375 C1097,380 1098,385 1099,390" stroke-width="2"/>
 <path d="M1087,374 C1092,378 1097,381 1102,382 C1108,384 1113,385 1117,386"/>
 <!-- ears / spikes -->
 <path d="M1099,272 C1101,285 1104,300 1110,316 M1101,294 C1108,302 1113,308 1118,312"/>
 <path d="M1110,305 C1114,292 1118,282 1123,272 C1128,258 1132,242 1136,227 C1138,240 1141,258 1146,279 C1148,286 1150,290 1151,294 C1150,299 1149,303 1147,307" stroke-width="2.1"/>
 <path d="M1116,279 C1120,292 1125,302 1129,312 M1125,290 C1130,296 1132,302 1134,306" stroke-width="1.5"/>
 <path d="M1166,309 C1170,300 1173,294 1177,290 M1177,312 C1181,305 1184,300 1188,297 M1157,310 C1160,303 1164,298 1168,296" stroke-width="1.6"/>
 <path d="M1086,320 C1092,310 1110,300 1132,301 C1150,302 1170,306 1182,318" stroke-width="1" opacity=".7"/>
 <!-- headband -->
 <path d="M1101,320 C1115,317 1128,316 1142,316 C1156,316 1168,318 1181,320" stroke-width="2.6"/>
 <path d="M1114,336 C1124,333 1134,331 1144,331 C1152,331 1160,331 1170,331" stroke-width="2.2"/>
 <path d="M1106,322 C1108,330 1110,336 1112,340" stroke-width="1.4"/>
 <!-- horn -->
 <path d="M1214,236 C1210,255 1205,272 1199,286 C1192,300 1186,310 1181,320 C1176,326 1172,330 1170,334 C1169,340 1169,345 1170,349 C1173,352 1177,353 1181,353 C1186,350 1191,344 1196,338 C1200,326 1204,314 1207,301 C1210,288 1212,276 1214,264 C1215,254 1215,244 1214,236Z" stroke-width="2.2"/>
 <!-- side spikes -->
 <path d="M1240,258 C1232,275 1224,292 1216,308 C1210,318 1206,325 1203,331" stroke-width="2"/>
 <path d="M1236,283 C1230,295 1222,308 1216,320"/>
 <path d="M1228,252 C1222,268 1214,284 1208,298" stroke-width="1.3"/>
 <path d="M1278,248 C1268,262 1255,278 1244,292" stroke-width="1.5"/>
 <path d="M1218,317 C1226,318 1232,325 1231,333 C1230,340 1226,344 1221,347" stroke-width="1.8"/>
 <!-- face -->
 <path d="M1115,345 C1115,356 1116,366 1117,376 C1120,384 1124,388 1128,391 C1134,396 1140,400 1147,404 C1155,406 1162,408 1169,408 C1177,407 1185,405 1191,402 C1196,396 1200,391 1202,386 C1205,376 1206,366 1206,358 C1205,350 1203,345 1200,341" stroke-width="2.1"/>
 <circle cx="1150.5" cy="367" r="12.5" stroke-width="2.2"/>
 <circle cx="1187.5" cy="375.5" r="12" stroke-width="2.2"/>
 <path d="M1153,359 L1150,375 M1190,367 L1187,382" stroke-width="1.8"/>
 <path d="M1162,385 L1170,386 L1166,391 M1162,395 L1166,391 L1170,395" stroke-width="1.5"/>
 <path d="M1168,357 C1171,355 1174,356 1174,360 M1179,360 C1181,359 1183,360 1183,362" stroke-width="1.3"/>
 <!-- neck / hair -->
 <path d="M1102,391 C1104,402 1105,412 1106,423 C1110,436 1115,448 1121,460 C1130,468 1142,476 1154,482 C1158,488 1162,492 1165,497 C1165,508 1165,520 1165,530" stroke-width="2"/>
 <path d="M1113,404 C1115,415 1116,425 1117,432 C1120,440 1124,446 1128,450 C1134,458 1140,464 1145,469 C1150,473 1156,478 1162,482" stroke-width="1.7"/>
 <path d="M1113,407 L1119,403 M1114,413 L1120,409 M1115,419 L1121,416 M1116,425 L1122,422 M1118,431 L1124,428" stroke-width="1.3"/>
 <path d="M1210,376 C1208,388 1207,398 1206,404 C1200,412 1194,418 1187,423 C1178,432 1168,442 1160,450 C1156,460 1153,470 1150,478" stroke-width="1.9"/>
 <path d="M1200,392 C1196,405 1190,415 1182,422 C1172,432 1164,440 1156,452" stroke-width="1.3"/>
 <path d="M1136,426 C1142,420 1148,417 1154,415 C1162,412 1168,410 1175,410" stroke-width="1.3"/>
 <path d="M1128,420 C1134,440 1140,455 1148,465" stroke-width="1.1"/>
 <!-- front leg left -->
 <path d="M1099,412 C1090,424 1082,436 1072,448 C1060,462 1048,480 1036,496 C1028,508 1020,520 1012,530 C1007,536 1003,540 1000,544" stroke-width="2"/>
 <path d="M1126,473 C1112,480 1095,495 1072,508 C1060,517 1048,527 1036,535 C1031,543 1027,550 1024,557 C1016,560 1008,562 1000,564" stroke-width="2"/>
 <path d="M1080,493 C1090,488 1100,484 1108,482 C1115,478 1120,476 1126,473" stroke-width="1.3"/>
 <path d="M1057,461 C1066,470 1074,484 1079,500 M1065,455 C1078,466 1087,478 1092,492 M1077,446 C1090,456 1099,470 1104,485 M1049,476 C1056,485 1061,496 1063,510 M1085,440 C1096,448 1104,458 1108,470" stroke-width="1.4"/>
 <path d="M1000,544 C1006,549 1011,556 1015,563 M1010,535 C1016,544 1020,551 1024,557 M1004,538 C1008,545 1010,550 1010,556 M1015,528 C1020,536 1024,542 1026,548" stroke-width="1.1"/>
 <!-- front leg right -->
 <path d="M1166,484 C1164,500 1162,512 1161,520 C1159,545 1157,570 1154,593 C1148,606 1141,618 1135,629 C1133,638 1134,646 1135,653 C1146,655 1158,654 1168,650 C1173,636 1178,624 1183,612 C1191,590 1198,568 1205,549 C1212,530 1218,510 1221,496 C1223,482 1224,468 1224,455" stroke-width="2"/>
 <path d="M1224,450 C1223,470 1223,480 1222,487 C1220,505 1216,520 1213,530" stroke-width="1.4"/>
 <path d="M1168,532 C1180,529 1192,533 1201,540 M1170,540 C1182,538 1192,541 1198,546 M1161,573 C1166,580 1170,585 1174,586 C1180,582 1187,578 1194,576 M1158,600 C1166,604 1174,606 1182,605 M1140,636 C1150,641 1160,641 1170,636 M1138,645 C1146,630 1150,620 1152,612" stroke-width="1.4"/>
 <path d="M1176,500 C1173,530 1170,560 1166,590 C1160,612 1152,632 1146,650" stroke-width="1.1"/>
 <!-- belly -->
 <path d="M1195,437 C1205,442 1215,447 1224,450 C1232,450 1240,449 1247,448 C1256,445 1264,441 1273,437" stroke-width="1.7"/>
 <path d="M1197,433 L1200,440 M1242,445 L1245,452 M1258,440 L1262,446" stroke-width="1.1"/>
 <path d="M1213,419 C1235,415 1260,411 1280,408" stroke-width="1.4"/>
 <path d="M1232,478 C1248,466 1264,455 1280,445" stroke-width="1.4"/>
 <!-- back body -->
 <path d="M1218,306 C1225,293 1233,281 1244,270 C1250,264 1256,258 1262,252 C1274,241 1286,234 1296,231 C1312,228 1325,224 1336,222 C1348,220 1356,219 1365,219 C1376,224 1384,230 1389,236 C1396,244 1400,252 1401,260 C1402,272 1402,284 1401,296 C1398,310 1394,322 1389,332 C1382,345 1376,355 1372,363 C1360,376 1345,386 1328,393 C1312,400 1296,406 1280,412 C1260,418 1236,424 1208,429" stroke-width="1.9"/>
 <path d="M1262,242 L1266,236 M1280,236 L1283,230 M1300,230 L1303,224 M1320,226 L1322,220 M1345,220 L1348,214 M1366,218 L1370,213" stroke-width="1.2"/>
 <path d="M1380,237 C1384,250 1381,262 1381,272 C1381,285 1380,297 1377,308 C1372,322 1366,334 1360,344 C1350,356 1340,366 1328,373 C1318,380 1305,387 1292,393" stroke-width="1.8"/>
 <path d="M1378,249 L1386,247 M1379,256 L1386,254" stroke-width="1.2"/>
 <path d="M1385,300 L1388,302 M1383,320 L1386,322 M1372,345 L1376,346" stroke-width="1.2"/>
 <path d="M1398,267 C1405,276 1412,286 1420,296" stroke-width="1.5"/>
 <path d="M1261,335 C1290,325 1330,313 1377,301" stroke-width="1.2"/>
 <path d="M1232,320 C1265,300 1310,275 1357,258" stroke-width="1.2"/>
 <path d="M1220,368 C1250,375 1285,383 1316,388" stroke-width="1.2"/>
 <path d="M1296,250 C1320,240 1345,233 1370,230" stroke-width="1" opacity=".6"/>
 <path d="M1236,404 C1270,398 1300,392 1320,385" stroke-width="1" opacity=".7"/>
 <!-- big tail arc right -->
 <path d="M1400,286 C1412,298 1424,308 1429,312 C1440,328 1446,338 1449,346 C1456,365 1460,378 1462,390 C1464,405 1464,418 1462,430 C1460,450 1455,470 1447,494 C1440,505 1432,515 1426,520" stroke-width="2"/>
 <path d="M1406,292 C1420,304 1432,322 1440,340 C1450,362 1456,385 1457,410 C1456,440 1450,465 1440,490" stroke-width="1.2"/>
 <path d="M1398,340 C1408,360 1412,380 1413,393" stroke-width="1.1" opacity=".8"/>
 <!-- back legs -->
 <path d="M1372,363 C1380,372 1386,382 1391,390 C1395,405 1398,418 1400,430" stroke-width="1.4"/>
 <path d="M1295,436 C1286,452 1280,465 1276,473 C1268,490 1262,505 1258,520 C1252,530 1248,538 1248,547 C1250,555 1254,560 1258,562 C1264,563 1270,563 1276,562 C1281,557 1285,552 1286,547 C1286,535 1284,526 1282,520 C1290,505 1298,490 1304,473 C1308,456 1310,440 1310,427" stroke-width="1.8"/>
 <path d="M1256,530 C1266,525 1276,525 1283,531 M1252,545 C1261,540 1273,540 1285,545 M1265,490 C1275,485 1286,487 1296,492 M1270,500 C1280,496 1290,497 1298,500" stroke-width="1.3"/>
 <path d="M1363,401 C1370,410 1376,420 1378,427 C1380,440 1382,452 1384,460 C1390,468 1395,472 1400,473 C1408,473 1412,470 1415,468 C1416,460 1416,452 1415,446 C1412,438 1408,432 1406,427 C1400,410 1395,398 1391,390" stroke-width="1.6"/>
 <path d="M1253,412 C1280,405 1305,398 1329,390 C1345,380 1355,372 1364,363" stroke-width="1.3"/>
 <path d="M1224,491 C1238,481 1250,472 1260,465 C1275,455 1290,446 1300,440" stroke-width="1.4"/>
 <path d="M1240,379 C1262,382 1285,384 1296,383" stroke-width="1.2"/>
</g>

<!-- DARK LEFT CAT -->
<g id="gdl" stroke="#4e3e3e" stroke-width="2">
 <!-- tail -->
 <path d="M901,216 C898,195 912,172 935,163 C955,155 985,160 998,185 C1006,205 1004,240 990,265 C978,285 962,292 954,302" stroke-width="2.2"/>
 <path d="M903,205 C903,225 912,243 938,243" stroke-width="2"/>
 <path d="M965,212 C976,238 972,262 958,280 C945,296 925,300 895,306" stroke-width="2.4"/>
 <path d="M930,228 C930,212 944,204 958,209 C966,212 969,220 969,228" stroke-width="1.6"/>
 <path d="M924,232 C924,220 930,210 940,207" stroke-width="1.3"/>
 <path d="M915,177 C928,168 945,163 962,170 C975,178 982,190 985,205" stroke-width="1.1" stroke="#8a7878"/>
 <path d="M985,178 C995,190 1000,205 1001,225" stroke-width="1.2"/>
 <!-- body left -->
 <path d="M877,297 C870,305 865,312 863,317 C858,335 857,350 858,357 C859,385 861,405 863,423 C868,445 872,462 877,479 C882,495 886,505 890,512 C893,520 893,525 894,530"/>
 <path d="M877,297 C885,292 893,300 897,303" stroke-width="1.6"/>
 <path d="M883,303 C878,315 874,325 874,334 C871,350 870,365 870,379 C872,405 874,425 877,446 C880,465 884,478 888,490" stroke-width="1.5"/>
 <path d="M871,470 C878,490 884,505 891,519 C893,530 895,540 896,543 C902,552 908,558 913,563 C920,568 925,572 931,574"/>
 <!-- body right / shoulder -->
 <path d="M952,303 C965,296 980,290 988,292 C993,295 996,298 997,301 C999,315 1000,325 1001,339 C998,355 994,365 988,379 C984,385 982,390 979,392" stroke-width="2.2"/>
 <path d="M948,334 C946,320 950,310 956,305" stroke-width="1.4"/>
 <ellipse cx="972" cy="406" rx="12" ry="10" stroke-width="2"/>
 <path d="M966,400 C970,408 976,410 980,404" stroke-width="1.2"/>
 <path d="M955,397 C956,415 958,430 959,446 C966,460 972,468 979,474 C985,480 990,486 994,490"/>
 <!-- hip faint -->
 <path d="M883,341 C895,330 905,323 912,323 C925,322 935,330 940,336" stroke="#9a8a8a" stroke-width="1.1"/>
 <path d="M906,357 C912,380 925,405 934,423 C940,440 945,455 948,468" stroke="#9a8a8a" stroke-width="1.1"/>
 <path d="M952,323 C970,345 980,360 992,346" stroke="#9a8a8a" stroke-width="1"/>
 <!-- vine loop left -->
 <path d="M863,312 C850,312 838,320 832,328 C824,338 821,350 823,357 C825,370 827,380 830,386 C840,395 848,393 854,392 C868,393 878,392 883,390 C892,385 896,375 894,368 C892,358 886,350 880,352 C874,354 874,362 880,364" stroke-width="2.2"/>
 <path d="M894,368 C898,352 892,345 885,343" stroke-width="1.3"/>
 <g stroke-width="1.6">
  <path d="M815,331 Q823,324 831,331 Q823,338 815,331Z" transform="rotate(-20 823 331)"/>
  <path d="M846,306 Q853,300 860,306 Q853,312 846,306Z" transform="rotate(20 853 306)"/>
  <path d="M809,356 Q818,349.6 827,356 Q818,362.4 809,356Z" transform="rotate(-70 818 356)"/>
  <path d="M831,369 Q837,363 843,369 Q837,375 831,369Z" transform="rotate(10 837 369)"/>
  <path d="M825,390 Q831,384 837,390 Q831,396 825,390Z" transform="rotate(70 831 390)"/>
  <path d="M845,402 Q851,396 857,402 Q851,408 845,402Z" transform="rotate(60 851 402)"/>
  <path d="M875,393 Q882,387 889,393 Q882,399 875,393Z" transform="rotate(10 882 393)"/>
  <path d="M893,377 Q899,371 905,377 Q899,383 893,377Z" transform="rotate(-40 899 377)"/>
  <path d="M889,343 Q895,337 901,343 Q895,349 889,343Z" transform="rotate(60 895 343)"/>
  <path d="M840,336 Q845,330 850,336 Q845,342 840,336Z" transform="rotate(-60 845 336)"/>
 </g>
 <!-- vine right -->
 <path d="M999,346 C1010,360 1020,375 1023,390 C1028,410 1030,425 1030,434 C1030,455 1029,475 1028,490 C1026,505 1022,512 1021,512 C1016,522 1010,530 1005,535 C1000,542 996,548 994,550" stroke-width="1.8"/>
 <g stroke-width="1.6">
  <path d="M1006,351 Q1013,345 1020,351 Q1013,357 1006,351Z" transform="rotate(30 1013 351)"/>
  <path d="M1005,372 Q1012,366 1019,372 Q1012,378 1005,372Z" transform="rotate(70 1012 372)"/>
  <path d="M1026,383 Q1033,377 1040,383 Q1033,389 1026,383Z" transform="rotate(30 1033 383)"/>
  <path d="M1015,411 Q1022,405 1029,411 Q1022,417 1015,411Z" transform="rotate(-70 1022 411)"/>
  <path d="M1032,428 Q1039,422 1046,428 Q1039,434 1032,428Z" transform="rotate(60 1039 428)"/>
  <path d="M1010,462 Q1018,456 1026,462 Q1018,468 1010,462Z" transform="rotate(-50 1018 462)"/>
  <path d="M1026,480 Q1033,474 1040,480 Q1033,486 1026,480Z" transform="rotate(70 1033 480)"/>
  <path d="M1012,498 Q1018,492 1024,498 Q1018,504 1012,498Z" transform="rotate(-40 1018 498)"/>
  <path d="M1023,415 Q1029,409 1035,415 Q1029,421 1023,415Z" transform="rotate(70 1029 415)"/>
  <ellipse cx="1032" cy="350" rx="5" ry="3.5"/>
 </g>
 <!-- head -->
 <path d="M918,470 C917,490 915,505 916,514 C916,530 918,540 920,543 C924,553 928,560 931,563 C938,570 944,573 949,574 C956,576 964,576 971,574 C980,570 990,562 1000,552 C1002,545 1002,540 1002,536 C1002,520 1002,505 1002,514"/>
 <path d="M921,446 C925,462 932,480 940,497" stroke-width="2.2"/>
 <path d="M940,497 C950,490 962,488 971,490" stroke-width="1.8"/>
 <path d="M973,499 C980,485 986,475 999,446 C1000,470 1001,490 1002,514" stroke-width="2.2"/>
 <path d="M926,470 C932,480 936,490 940,496" stroke-width="1.3"/>
 <path d="M949,512 C943,520 945,530 953,532 C959,533 963,529 964,524 C960,528 953,528 952,522 C951,518 952,514 955,511" stroke-width="2" fill="none"/>
 <circle cx="946" cy="549" r="2.8" stroke-width="1.5"/>
 <circle cx="961" cy="547" r="3.3" stroke-width="1.8"/>
 <path d="M929,552 C936,548 946,550 955,563 C945,569 934,565 929,552Z" stroke-width="3.4" stroke="#2a1a1a"/>
 <path d="M960,561 C968,549 982,543 994,545 C990,557 976,566 960,561Z" stroke-width="3.4" stroke="#2a1a1a"/>
 <path d="M942,554 L942,562 M978,550 L976,558" stroke-width="1.8"/>
 <ellipse cx="957" cy="573" rx="4" ry="2.5" fill="#3a2828" stroke="none"/>
 <path d="M864,590 C880,583 900,576 918,572 M887,588 C900,583 912,578 922,577" stroke="#7a6a6a" stroke-width="1.1"/>
 <!-- front leg -->
 <path d="M929,581 C935,595 938,603 940,608 C941,616 942,622 944,626 C946,630 950,634 953,634 C960,632 966,628 969,626 C972,618 972,610 971,603 C966,593 962,585 958,579" stroke-width="1.8"/>
 <path d="M948,626 L950,635 M958,624 L960,634" stroke-width="1.2"/>
 <path d="M1000,537 C999,555 998,570 998,570 C993,590 990,600 987,608 C978,630 972,640 967,648 C960,662 955,675 953,681 C950,695 948,705 947,710" stroke-width="2.1"/>
 <path d="M944,634 C938,650 933,660 931,670 C926,685 922,695 920,703 C919,710 919,715 920,718 C924,724 928,727 929,727 C934,726 938,725 940,725 C944,715 945,710 947,705" stroke-width="1.8"/>
 <path d="M922,706 C925,718 928,724 930,724 M930,708 C932,718 934,722 936,724" stroke-width="1.1"/>
 <!-- vine lower -->
 <path d="M936,599 C925,610 916,620 909,630 C902,645 898,660 896,670 C892,690 891,700 892,705 C894,720 896,730 899,736 C905,748 912,755 918,759 C928,764 935,767 942,768 C950,769 955,767 960,764 C968,758 972,752 975,747 C978,740 978,734 977,729 C975,724 971,721 968,721 C962,721 956,723 953,725 C948,730 946,734 946,736 C948,742 952,745 955,746 C960,745 964,742 966,740 C966,736 965,733 964,733" stroke-width="2.1"/>
 <path d="M899,744 C908,755 918,762 923,766 C928,775 931,782 933,788" stroke-width="1.8"/>
 <g stroke-width="1.6">
  <path d="M910,600 Q921,594 932,600 Q921,606 910,600Z" transform="rotate(5 921 600)"/>
  <path d="M922,617 Q931,611 940,617 Q931,623 922,617Z" transform="rotate(-75 931 617)"/>
  <path d="M885,630 Q895,624 905,630 Q895,636 885,630Z" transform="rotate(-20 895 630)"/>
  <path d="M903,654 Q911,647 919,654 Q911,661 903,654Z" transform="rotate(70 911 654)"/>
  <path d="M869,669 Q882,662 895,669 Q882,676 869,669Z" transform="rotate(-40 882 669)"/>
  <path d="M910,643 Q916,652 910,661 Q904,652 910,643Z" transform="rotate(-15 910 652)"/>
  <path d="M903,688 Q911,696 903,704 Q895,696 903,688Z" transform="rotate(-30 903 696)"/>
  <path d="M881,707 Q889,720 881,733 Q873,720 881,707Z" transform="rotate(25 881 720)"/>
  <path d="M906,741 Q916,735 926,741 Q916,747 906,741Z" transform="rotate(15 916 741)"/>
  <path d="M894,743 Q902,755 894,767 Q886,755 894,743Z" transform="rotate(20 894 755)"/>
  <path d="M968,755 Q985,745 1002,755 Q985,765 968,755Z" transform="rotate(-30 985 755)"/>
  <path d="M939,780 Q960,770 981,780 Q960,790 939,780Z" transform="rotate(20 960 780)"/>
  <path d="M979,710 Q987,724 979,738 Q971,724 979,710Z" transform="rotate(-15 979 724)"/>
 </g>
 <!-- sparkles -->
 <path d="M910,248 C911,262 913,268 918,271 C913,275 911,280 911,286 C909,280 907,274 903,268 C907,265 909,258 910,248Z" stroke-width="1.7"/>
 <path d="M855,508 C856,522 858,528 863,531 C858,535 856,542 856,550 C854,542 852,536 848,532 C852,528 854,520 855,508Z" stroke-width="1.7"/>
 <path d="M1067,361 C1068,375 1069,380 1073,384 C1069,388 1068,394 1067,401 C1065,394 1064,389 1060,384 C1064,380 1066,372 1067,361Z" stroke-width="1.7" stroke="#6a6070"/>
 <path d="M1225,542 C1226,560 1228,568 1233,573 C1228,578 1226,590 1226,605 C1224,590 1222,580 1217,574 C1222,568 1224,558 1225,542Z" stroke-width="1.7"/>
 <ellipse cx="858" cy="273" rx="6.5" ry="5" stroke-width="1.6"/>
 <ellipse cx="838" cy="463" rx="6" ry="5" stroke-width="1.6"/>
 <ellipse cx="1032" cy="350" rx="5" ry="4" stroke-width="1.6"/>
 <ellipse cx="999" cy="640" rx="6" ry="4" transform="rotate(-20 999 640)" stroke-width="1.6"/>
</g>

<!-- DARK RIGHT CAT -->
<g id="gdr" stroke="#3e2a2a" stroke-width="2.2">
 <!-- crescent horn -->
 <path d="M1360,438 C1365,450 1375,456 1390,455 C1405,452 1412,440 1410,428 C1408,415 1398,406 1384,405 C1378,405 1375,407 1374,408 C1382,412 1388,420 1386,432 C1383,440 1376,444 1361,440Z" stroke-width="2.1"/>
 <!-- ears -->
 <path d="M1310,510 C1318,497 1322,490 1323,483 C1323,460 1322,440 1322,427 C1324,414 1328,405 1330,401 C1332,415 1334,425 1334,436 C1338,455 1342,470 1345,483"/>
 <path d="M1319,505 C1328,497 1335,490 1341,488 C1352,485 1362,486 1369,486 C1378,488 1384,491 1387,494 C1395,492 1405,490 1415,486 C1422,478 1427,470 1430,460 C1435,440 1440,425 1444,411 C1443,430 1442,440 1441,442 C1440,460 1434,475 1428,489 C1427,500 1426,510 1426,520"/>
 <path d="M1430,460 C1420,478 1410,490 1397,505 C1390,510 1385,514 1378,516"/>
 <ellipse cx="1372" cy="508" rx="12" ry="9" stroke-width="1.9"/>
 <!-- ram horns -->
 <circle cx="1300" cy="537" r="15" stroke-width="2"/>
 <path d="M1300,545 C1293,540 1292,530 1300,527" stroke-width="1.4"/>
 <path d="M1426,520 C1440,525 1450,540 1450,556 C1450,575 1440,590 1420,592 C1400,592 1388,580 1388,562 C1388,550 1396,540 1405,540 C1415,540 1420,548 1418,556 C1415,562 1408,562 1405,558" stroke-width="2.3"/>
 <path d="M1396,548 C1400,570 1420,580 1438,570" stroke-width="1.2"/>
 <!-- face -->
 <path d="M1313,520 C1310,535 1309,550 1310,557 C1310,570 1312,580 1316,588 C1320,594 1324,597 1327,598 C1340,597 1350,596 1358,595 C1368,592 1375,590 1382,587"/>
 <ellipse cx="1326" cy="551" rx="10" ry="15" stroke-width="3"/>
 <path d="M1326,542 L1326,560" stroke-width="1.6"/>
 <path d="M1347,552 C1355,545 1370,546 1378,554 C1382,565 1375,578 1362,578 C1350,578 1344,568 1347,552Z" stroke-width="3.2"/>
 <path d="M1362,553 L1361,570" stroke-width="1.5"/>
 <circle cx="1336" cy="531" r="3" stroke-width="1.4"/>
 <circle cx="1350" cy="537" r="3.6" stroke-width="1.5"/>
 <path d="M1330,573 L1338,574 L1334,580Z" fill="#3e2a2a" stroke-width="1.2"/>
 <path d="M1334,580 L1333,586" stroke-width="1.2"/>
 <path d="M1262,580 C1280,578 1300,578 1310,580 M1268,588 C1285,587 1300,588 1310,590" stroke="#9a8a8a" stroke-width="1"/>
 <!-- body -->
 <path d="M1325,598 C1322,610 1318,620 1317,623 C1316,640 1315,650 1315,662" stroke-width="2.3"/>
 <path d="M1382,595 C1390,600 1396,605 1400,610 C1410,625 1420,640 1428,649 C1435,660 1440,668 1442,670" stroke-width="1.8"/>
 <path d="M1410,587 C1415,598 1418,605 1421,610 C1430,630 1436,650 1442,670" stroke-width="1.4"/>
 <path d="M1398,616 C1410,622 1418,630 1419,636 C1425,650 1430,665 1432,678 C1434,700 1434,720 1434,745" stroke-width="1.5"/>
 <path d="M1401,584 C1412,595 1420,605 1425,613 C1435,628 1443,643 1449,658 C1458,690 1463,715 1467,738" stroke-width="1.8"/>
 <path d="M1404,619 C1415,635 1424,650 1428,664 C1434,690 1436,715 1437,744" stroke-width="1.2" stroke="#7a6a6a"/>
 <path d="M1393,621 C1380,635 1368,650 1357,662" stroke-width="1.1" stroke="#9a8a8a"/>
 <path d="M1315,698 C1310,715 1306,725 1305,730 C1302,750 1302,765 1302,782 C1304,800 1306,815 1310,828" stroke-width="2.2"/>
 <path d="M1310,828 C1325,832 1340,836 1352,836 C1370,836 1380,836 1390,836 C1400,834 1410,830 1419,826" stroke-width="2.3"/>
 <!-- tail -->
 <path d="M1294,740 C1280,738 1270,740 1261,745 C1250,755 1243,762 1240,769 C1236,785 1234,800 1235,807 C1237,820 1240,828 1243,833 C1250,840 1255,845 1261,846 C1280,852 1300,856 1326,859 C1350,861 1380,860 1403,859 C1420,856 1432,850 1442,846 C1450,842 1455,840 1458,838 C1462,825 1465,815 1467,803" stroke-width="2.2"/>
 <path d="M1289,745 C1280,760 1275,770 1274,782 C1276,800 1280,812 1287,820 C1300,828 1312,833 1326,833" stroke-width="1.6"/>
 <path d="M1245,790 C1248,810 1255,825 1270,838 C1300,850 1340,855 1380,852" stroke-width="1.1" stroke="#7a6a6a"/>
 <path d="M1360,838 C1375,837 1390,832 1419,821" stroke-width="1.4"/>
 <path d="M1360,862 C1380,861 1395,860 1404,859 C1420,857 1430,855 1434,853 C1445,848 1452,843 1458,838" stroke-width="1.8"/>
 <path d="M1416,806 C1422,815 1428,822 1428,827 C1426,835 1422,845 1419,850" stroke-width="1.6"/>
 <!-- clouds -->
 <path d="M1183,704 A7,7 0 0 1 1189,688 A8,8 0 0 1 1204,683 A9,9 0 0 1 1222,677 A8,8 0 0 1 1233,660 A13,13 0 0 1 1259,634 A8,8 0 0 1 1274,639 A9,9 0 0 1 1289,633 A13,13 0 0 1 1314,661 A8,8 0 0 1 1331,661 A9,9 0 0 1 1346,674 A6,6 0 0 1 1359,670 A5,5 0 0 1 1362,679 L1352,693 A26.4,22 0 0 1 1322,698 A28.6,19.8 0 0 1 1294,699 A24.2,19.8 0 0 1 1274,709 A24.2,19.8 0 0 1 1253,704 A19.8,17.6 0 0 1 1235,704 A19.8,17.6 0 0 1 1216,701 A17.6,17.6 0 0 1 1200,699 A15.4,15.4 0 0 1 1190,709 Z" stroke-width="2.4"/>
 <path d="M1242,652 C1238,646 1244,640 1250,644 C1254,650 1250,658 1242,658 C1234,656 1233,646 1238,641" stroke-width="1.9"/>
 <path d="M1310,683 C1306,677 1312,672 1317,676 C1320,682 1316,688 1309,687 C1302,684 1302,675 1308,671" stroke-width="1.9"/>
 <path d="M1273,648 C1276,652 1276,658 1274,662 M1268,650 C1270,654 1270,658 1269,661 M1256,680 C1262,688 1270,690 1276,686 M1260,676 C1265,682 1270,683 1274,680" stroke-width="1.1"/>
 <path d="M1380,766 A6,6 0 0 1 1391,765 A8,8 0 0 1 1405,757 A7,7 0 0 1 1419,760 A7,7 0 0 1 1429,752 A9,9 0 0 1 1444,746 A7,7 0 0 1 1456,746 A10,10 0 0 1 1470,750 A12,12 0 0 1 1479,767 A8,8 0 0 1 1488,779 A6,6 0 0 1 1496,787 A6,6 0 0 1 1509,784 A7,6 0 0 1 1526,789 A8.8,8.8 0 0 1 1526,797 A26.4,17.6 0 0 1 1499,795 A22,17.6 0 0 1 1478,798 A17.6,17.6 0 0 1 1461,801 A15.4,15.4 0 0 1 1449,798 A19.8,17.6 0 0 1 1437,804 A30.8,17.6 0 0 1 1410,806 A13.2,13.2 0 0 1 1406,797 A22,22 0 0 1 1388,786 Z" stroke-width="2.4"/>
 <path d="M1434,764 C1428,760 1432,752 1440,754 C1444,760 1440,768 1432,768 C1425,765 1425,755 1432,750" stroke-width="1.9"/>
 <path d="M1487,788 C1482,784 1486,778 1492,780 C1495,786 1490,792 1484,790" stroke-width="1.6"/>
 <path d="M1458,763 C1462,768 1463,773 1461,778 M1395,780 C1398,786 1402,788 1406,789" stroke-width="1.1"/>
 <path d="M1440,584 A8,8 0 0 1 1456,584 A9,9 0 0 1 1468,593 A9,9 0 0 1 1478,604 A6,6 0 0 1 1477,616 A5,5 0 0 1 1485,619 A8,8 0 0 1 1500,611 A7,7 0 0 1 1514,613 A17.6,17.6 0 0 1 1508,623 A26.4,22 0 0 1 1496,631 A24.2,17.6 0 0 1 1476,634 A24.2,17.6 0 0 1 1455,637 A19.8,17.6 0 0 1 1440,631" stroke-width="2.2"/>
 <path d="M1452,628 C1446,625 1449,618 1456,620 C1459,626 1455,632 1448,631 C1442,628 1443,619 1449,616" stroke-width="1.8"/>
 <path d="M1472,612 C1467,608 1471,602 1477,604 C1479,610 1474,615 1468,613" stroke-width="1.6"/>
 <path d="M1442,594 C1445,598 1446,603 1445,606 M1448,590 C1451,595 1451,600 1450,603" stroke-width="1.1"/>
 <!-- sparkles right -->
 <path d="M1484,460 C1485,478 1487,486 1493,492 C1487,498 1485,508 1486,522 C1483,508 1481,498 1475,493 C1481,486 1483,476 1484,460Z" stroke-width="1.8"/>
 <path d="M1510,673 C1511,690 1513,698 1518,705 C1513,712 1511,722 1511,738 C1509,722 1507,712 1501,706 C1507,698 1509,690 1510,673Z" stroke-width="1.8"/>
</g>
</g>
<use href="#drw" transform="translate(1.2,0.9)" opacity="0.5"/>
<use href="#drw" transform="translate(-0.9,0.4)" opacity="0.22"/>
</svg>


<!-- CANVAS scrollbars -->
<div class="a" style="left:1894px;top:92px;width:19px;height:860px;background:#f0f0f0;border-left:1px solid #dedede"></div>
<div class="a" style="left:474px;top:952px;width:1420px;height:19px;background:#f0f0f0;border-top:1px solid #dedede"></div>
<div class="a" style="left:1894px;top:952px;width:19px;height:19px;background:#dcdcdc"></div>
<div class="a sbt2" style="left:1895px;top:93px"><i class="up"></i></div>
<div class="a sbt2" style="left:1895px;top:932px"><i class="dn"></i></div>
<div class="a" style="left:1895px;top:382px;width:19px;height:281px;background:#b0b0b0;border:2px solid #5a5a5a;border-radius:3px"></div>
<div class="a sbt2" style="left:474px;top:953px"><i class="lt"></i></div>
<div class="a sbt2" style="left:1874px;top:953px"><i class="rt"></i></div>
<div class="a" style="left:912px;top:953px;width:543px;height:18px;background:#b0b0b0;border:2px solid #5a5a5a;border-radius:3px"></div>

<!-- TABS -->
<div class="a tab sel" style="left:472px;top:977px"><svg class="a pg" width="15" height="21"><path d="M1.5 1.5 H9 L13.5 6 V19.5 H1.5Z" fill="#fff" stroke="#888"/><path d="M9 1.5 V6 H13.5" fill="none" stroke="#888"/></svg><span class="a" style="left:26px;top:5px">котики.sai</span><span class="a" style="right:7px;top:4px;font-size:12.5px">25%</span></div>
<div class="a tab" style="left:672px;top:977px"><svg class="a pg" width="15" height="21"><path d="M1.5 1.5 H9 L13.5 6 V19.5 H1.5Z" fill="#fff" stroke="#888"/><path d="M9 1.5 V6 H13.5" fill="none" stroke="#888"/></svg><span class="a" style="left:26px;top:5px">Новый Холст</span><span class="a" style="right:7px;top:4px;font-size:12.5px">00%</span></div>
<div class="a tab" style="left:872px;top:977px"><svg class="a pg" width="15" height="21"><path d="M1.5 1.5 H9 L13.5 6 V19.5 H1.5Z" fill="#fff" stroke="#888"/><path d="M9 1.5 V6 H13.5" fill="none" stroke="#888"/></svg><span class="a" style="left:26px;top:5px">Новый Холст</span><span class="a" style="right:7px;top:4px;font-size:12.5px">75%</span></div>

<!-- STATUS -->
<span class="a" style="left:1534px;top:1010px;font-size:12px;color:#f0a048;white-space:nowrap;letter-spacing:-.1px">Загрузка памяти:87% (237MB / 915MB)</span>
<div class="a key" style="left:1760px;top:1009px"><b>Shift</b></div>
<div class="a key" style="left:1782px;top:1009px"><b>Ctrl</b></div>
<div class="a key" style="left:1805px;top:1009px"><b>Alt</b></div>
<div class="a key" style="left:1828px;top:1009px"><b>SPC</b></div>
<div class="a key" style="left:1850px;top:1009px"><svg class="a" style="left:2px;top:1px" width="15" height="14"><path d="M7.5 0.5 L11 4 H4Z M7.5 13.5 L11 10 H4Z M0.5 7 L4 3.5 V10.5Z M14.5 7 L11 3.5 V10.5Z" fill="#111"/></svg></div>
<div class="a key" style="left:1872px;top:1009px"><b>Any</b></div>
<div class="a key" style="left:1895px;top:1009px"><svg class="a" style="left:2px;top:1px" width="15" height="14"><path d="M2 13 L3 10 L11 2 Q13 1 13.5 2.5 Q14 4 12 5 L4 12Z" fill="none" stroke="#111" stroke-width="1.1"/></svg></div>

<div id="taskbar" class="a">
 <div class="a" style="left:0;top:0;width:61px;height:50px;background:#2e1b17"></div>
 <svg class="a" style="left:20px;top:14px" width="21" height="22"><path d="M0 3 L9 1.7 V10 H0Z M10.3 1.5 L21 0 V10 H10.3Z M0 11.3 H9 V19.6 L0 18.3Z M10.3 11.3 H21 V22 L10.3 20.5Z" fill="#fff"/></svg>
 <div class="a" style="left:61px;top:0;width:429px;height:50px;background:#333333"></div>
 <svg class="a" style="left:74px;top:14px" width="22" height="22"><circle cx="13.5" cy="8.5" r="6.8" fill="none" stroke="#eee" stroke-width="1.6"/><path d="M8.5 13.5 L1.5 20.5" stroke="#eee" stroke-width="1.8"/></svg>
 <span class="a" style="left:110px;top:15px;font-size:18px;color:#e8e8e8;white-space:nowrap">Введите здесь текст для поиска</span>
 <div class="a" style="left:509px;top:15px;width:21px;height:21px;border-radius:50%;border:2.6px solid #fff"></div>
 <svg class="a" style="left:569px;top:14px" width="22" height="22"><path d="M1 1.5 H14 M1 20.5 H14 M1 1 V4 M14 1 V4 M1 18 V21 M14 18 V21" stroke="#fff" stroke-width="1.3"/><rect x="1.5" y="6.5" width="12" height="9" fill="none" stroke="#fff" stroke-width="1.3"/><path d="M19.5 1 V21" stroke="#fff" stroke-width="1.3"/><rect x="17.5" y="7" width="4" height="4" fill="#fff"/></svg>
 <svg class="a" style="left:628px;top:9px" width="32" height="32"><defs><linearGradient id="eg" x1="0" y1="0" x2="1" y2="1"><stop offset="0" stop-color="#2bb0e8"/><stop offset=".55" stop-color="#40c8a0"/><stop offset="1" stop-color="#78d848"/></linearGradient><linearGradient id="eb" x1="0" y1="0" x2=".3" y2="1"><stop offset="0" stop-color="#1e9ae6"/><stop offset="1" stop-color="#0c4fa8"/></linearGradient></defs><circle cx="16" cy="16" r="15" fill="url(#eg)"/><path d="M1,16 C1,7 8,1.5 16,1.5 C9,4 4,10 4.5,17 C5,25 12,30.5 20,30.5 C18.5,30.9 17.3,31 16,31 C7.5,31 1,24 1,16Z" fill="url(#eb)"/><path d="M6,19 C6,12 11,8.5 16,9 C21,9.5 23,13 22,16 C21,18 18.5,18.5 17,17.5 C15,21 18,25 23.5,25 C26.5,25 29,23.5 30.5,21.5 C28.5,27 23,31 16,31 C10,31 6,25.5 6,19Z" fill="#1a5fb8"/><path d="M11,18 C11,14 13.5,12 16.5,12 C19.5,12 21,14 20,16 C18,17 16,17 15,15.5 C13,18 13,21 15,23 C12.5,22.5 11,20.5 11,18Z" fill="#2e1e1c"/></svg>
 <svg class="a" style="left:691px;top:13px" width="30" height="24"><path d="M1 2 Q1 1 2 1 H10 L12 3 H28 Q29 3 29 4 V22 Q29 23 28 23 H2 Q1 23 1 22Z" fill="#f5c84a"/><path d="M1 5 H29" stroke="#e0a820" stroke-width="1.5"/><path d="M8 23 V12 H22 V23 H18 V16 H12 V23Z" fill="#3a8ee0"/></svg>
 <div class="a" style="left:753px;top:10px;width:30px;height:30px;border-radius:5px;background:#1c1c1c"><svg class="a" style="left:4px;top:5px" width="22" height="20"><path d="M3 18 V3 L19 17 V2" fill="none" stroke="#999" stroke-width="4.5" stroke-linejoin="bevel"/></svg></div>
 <svg class="a" style="left:816px;top:10px" width="29" height="29"><circle cx="14.5" cy="14.5" r="14" fill="#dd4535"/><path d="M14.5 14.5 L2.4 7.5 A14 14 0 0 0 14.5 28.5Z" fill="#27a050"/><path d="M14.5 14.5 L14.5 28.5 A14 14 0 0 0 26.6 7.5 Z" fill="#fccb2c"/><path d="M14.5 14.5 L2.4 7.5 A14 14 0 0 1 26.6 7.5Z" fill="#dd4535"/><circle cx="14.5" cy="14.5" r="6.3" fill="#fff"/><circle cx="14.5" cy="14.5" r="5" fill="#4a88f0"/></svg>
 <div class="a" style="left:805px;top:47px;width:51px;height:3px;background:#c4a6ea"></div>
 <div class="a" style="left:862px;top:0;width:61px;height:50px;background:#4e4644"></div>
 <div class="a" style="left:862px;top:47px;width:61px;height:3px;background:#c4a6ea"></div>
 <svg class="a" style="left:877px;top:10px" width="30" height="30"><rect x="0" y="2" width="30" height="28" rx="3" fill="#2e8a30"/><circle cx="17" cy="13" r="12" fill="#c8e878" stroke="#e06020" stroke-width="1.5"/><path d="M17 1 V25 M5 13 H29 M9 5 L25 21 M25 5 L9 21" stroke="#eef8c8" stroke-width="1"/><path d="M3 18 L28 29" stroke="#7a5020" stroke-width="3.5"/></svg>
 <div class="a" style="left:940px;top:11px;width:28px;height:27px;background:#031e36;border:1.5px solid #31a8ff"><span class="a" style="left:3px;top:2px;font-size:16px;font-weight:bold;color:#31a8ff;letter-spacing:-.5px">Ps</span></div>
 <svg class="a" style="left:1003px;top:42px" width="0" height="0"></svg>
 <svg class="a" style="left:1003px;top:13px" width="24" height="24" viewBox="-12 -12 24 24"><g fill="#fff"><circle r="8"/><g id="tt"><rect x="-2.3" y="-11.5" width="4.6" height="6"/></g><use href="#tt" transform="rotate(45)"/><use href="#tt" transform="rotate(90)"/><use href="#tt" transform="rotate(135)"/><use href="#tt" transform="rotate(180)"/><use href="#tt" transform="rotate(225)"/><use href="#tt" transform="rotate(270)"/><use href="#tt" transform="rotate(315)"/></g><circle r="4.2" fill="#2e1f1d"/></svg>
 <svg class="a" style="left:1062px;top:10px" width="32" height="30"><rect x="0" y="0" width="32" height="30" fill="#5cbd4a"/><path d="M4 5 L20 24 L23 28 L18 26 L2 8Z" fill="#fff"/><path d="M18 3 Q24 10 27 3 M20 3 Q23 14 29 6 M22 18 H28 V21 H22Z" fill="none" stroke="#a8e098" stroke-width="1.2"/></svg>
 <!-- tray -->
 <svg class="a" style="left:1509px;top:18px" width="18" height="11"><path d="M1 10 L9 2 L17 10" fill="none" stroke="#eee" stroke-width="1.4"/></svg>
 <svg class="a" style="left:1540px;top:15px" width="18" height="20"><path d="M4 3 Q9 0 14 3 M4 17 Q9 20 14 17" fill="none" stroke="#ddd" stroke-width="1"/><rect x="1.5" y="6" width="10" height="8" rx="1" fill="none" stroke="#eee" stroke-width="1.3"/><path d="M12 9 L16.5 6.5 V13.5 L12 11" fill="none" stroke="#eee" stroke-width="1.3"/></svg>
 <svg class="a" style="left:1568px;top:17px" width="22" height="15"><path d="M3 14 Q0 14 0.5 10.5 Q1 8 4 8 Q5 3 10 3 Q14 3 15.5 7 Q20 6.5 21 10.5 Q21.5 14 18 14Z" fill="#e8e8e8"/></svg>
 <svg class="a" style="left:1597px;top:15px" width="22" height="18"><path d="M3 1 V5 M6 1 V5 M2 5 H7 V8 Q4.5 10 4.5 12" fill="none" stroke="#eee" stroke-width="1.2"/><rect x="5.5" y="8.5" width="14" height="8" fill="none" stroke="#eee" stroke-width="1.3"/><rect x="7" y="10" width="11" height="5" fill="#eee"/><rect x="19.5" y="11" width="2" height="3" fill="#eee"/></svg>
 <svg class="a" style="left:1629px;top:16px" width="20" height="18"><path d="M1.5 16 Q2 5 16 3 M4.5 16 Q5 8 15 6.5 M7.5 16 Q8 11 14 10" fill="none" stroke="#ddd" stroke-width="1.1"/><circle cx="15.5" cy="15" r="1.8" fill="#eee"/></svg>
 <div class="a" style="left:1654px;top:1px;width:28px;height:48px;background:#3a3230"></div>
 <svg class="a" style="left:1657px;top:16px" width="22" height="18"><path d="M1.5 6 H5 L10 1.5 V16.5 L5 12 H1.5Z" fill="none" stroke="#eee" stroke-width="1.2"/><path d="M13 6.5 Q14.5 9 13 11.5 M16 4 Q19 9 16 14 M19 1.5 Q23 9 19 16.5" fill="none" stroke="#ddd" stroke-width="1.1"/></svg>
 <svg class="a" style="left:1692px;top:14px" width="22" height="22"><path d="M6 17 L16 3 Q18 1 19.5 2.5 Q20.5 4 18.5 6 L8 19 Z" fill="none" stroke="#eee" stroke-width="1.3"/><path d="M14 8 Q20 8 19 13 Q18 16 13 15 M6 17 Q1 18 2 20 Q3 21.5 7 19" fill="none" stroke="#eee" stroke-width="1.2"/></svg>
 <span class="a" style="left:1731px;top:17px;font-size:14px;color:#f0f0f0">РУС</span>
 <span class="a" style="left:1793px;top:5px;font-size:14px;color:#f0f0f0">20:30</span>
 <span class="a" style="left:1775px;top:28px;font-size:14px;color:#f0f0f0">05.12.2020</span>
 <svg class="a" style="left:1867px;top:17px" width="32" height="26"><path d="M1 1 H21 V15 H11 L6 20 V15 H1Z" fill="#fff"/><path d="M4.5 5 H17.5 M4.5 8 H17.5 M4.5 11 H14" stroke="#2e1f1d" stroke-width="1.1"/><circle cx="21.5" cy="16.5" r="8" fill="#2e1f1d" stroke="#ddd" stroke-width="1.1"/><text x="21.5" y="21" font-family="Liberation Sans" font-size="12.5" fill="#fff" text-anchor="middle">3</text></svg>
 <div class="a" style="left:1914px;top:0;width:1px;height:50px;background:#666"></div>
</div>

</body></html>
